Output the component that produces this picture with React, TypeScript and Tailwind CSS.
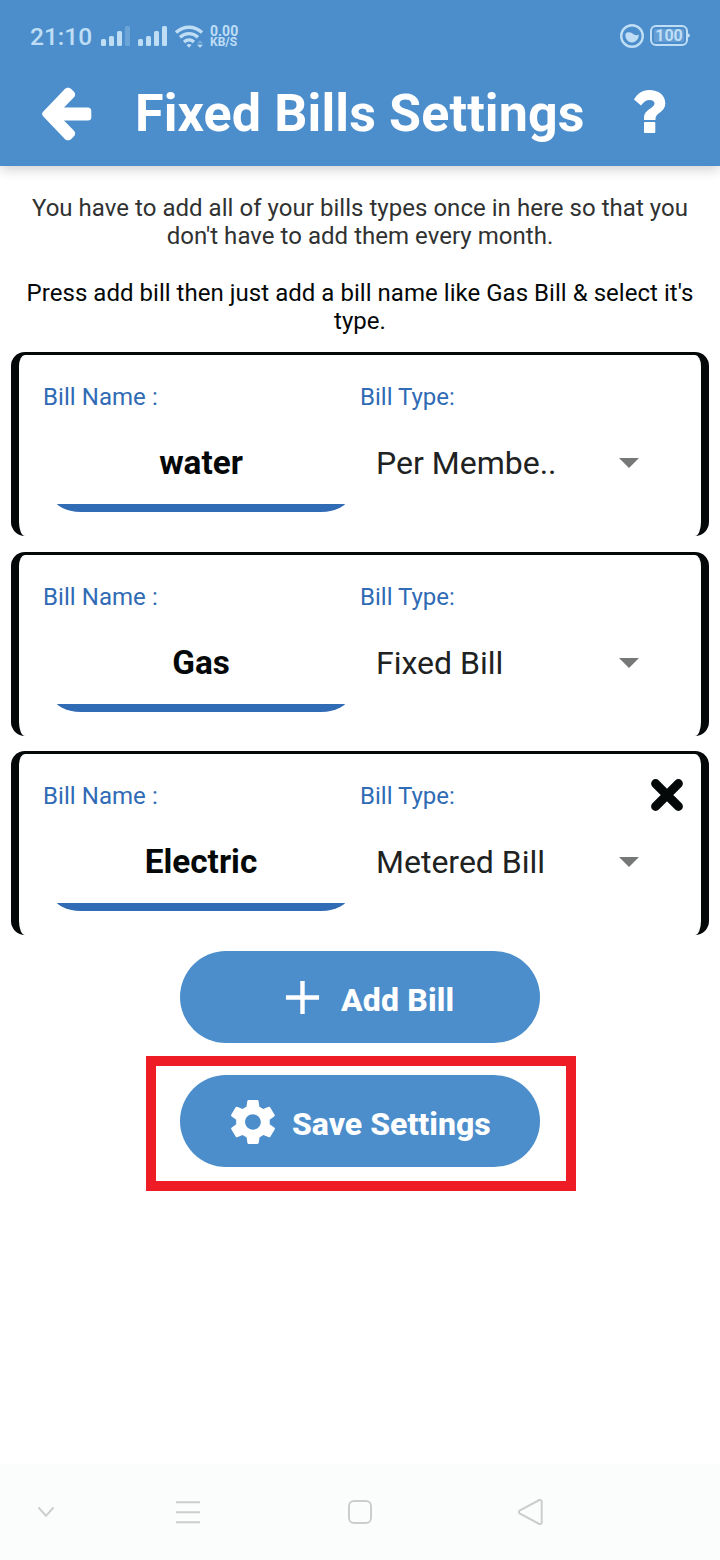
import { IoMdAdd, IoMdSettings } from "react-icons/io";

type Bill = { name: string; type: string; removable?: boolean };

const bills: Bill[] = [
  { name: "water", type: "Per Membe.." },
  { name: "Gas", type: "Fixed Bill" },
  { name: "Electric", type: "Metered Bill", removable: true },
];

function StatusBar() {
  return (
    <div className="flex h-[72px] items-center justify-between pl-[30px] pr-[30px] text-[#bfdef5]">
      <div className="flex items-center">
        <span className="w-[71px] whitespace-nowrap pt-[2px] text-[24.500px] font-medium leading-[28px]">21:10</span>
        <svg className="h-5 w-[66px]" viewBox="0 0 66 20" fill="currentColor">
          <rect x="0" y="13" width="5" height="7" rx="1.5" />
          <rect x="8" y="10" width="5" height="10" rx="1.5" />
          <rect x="16" y="5" width="5" height="15" rx="1.5" />
          <rect x="24" y="0" width="5" height="20" rx="1.5" opacity="0.28" />
          <rect x="37" y="13" width="5" height="7" rx="1.5" />
          <rect x="45" y="10" width="5" height="10" rx="1.5" />
          <rect x="53" y="5" width="5" height="15" rx="1.5" />
          <rect x="61" y="0" width="5" height="20" rx="1.5" />
        </svg>
        <svg className="ml-2 h-[23px] w-[28px]" viewBox="0 0 28 23" fill="none" stroke="currentColor" strokeWidth="3.300">
          <path d="M1 7.500C8.500 0.500 19.500 0.500 27 7.500" />
          <path d="M5 12.300C10.500 7.300 17.500 7.300 23 12.300" />
          <path d="M9 17C12 14.300 16 14.300 19 17" />
          <path d="M11.500 20C13 18.600 15 18.600 16.500 20L14 22.700Z" fill="currentColor" stroke="none" />
          <path d="M22 18.500L25 15L28 18.500Z" fill="currentColor" stroke="none" opacity="0.35" />
          <path d="M22 19.700H28L25 22.700Z" fill="currentColor" stroke="none" />
        </svg>
        <div className="ml-[7px] flex flex-col whitespace-nowrap font-bold">
          <span className="text-[14px] leading-[12px]">0.00</span>
          <span className="text-[12px] leading-[11px]">KB/S</span>
        </div>
      </div>
      <svg className="h-6 w-[70px]" viewBox="0 0 70 24" fill="none">
        <circle cx="12" cy="12" r="10.800" stroke="currentColor" strokeWidth="2.400" />
        <path d="M5.500 9.800C8 7 11.500 8.500 13.500 10.200C15.500 11.800 17.500 11.500 18.800 10.600C18.900 15 16 18.500 12 18.500C7.800 18.500 4.700 14.500 5.500 9.800Z" fill="currentColor" />
        <rect x="31" y="2" width="36" height="19" rx="5" stroke="currentColor" strokeWidth="2" />
        <rect x="34" y="5" width="30" height="13" rx="2" fill="currentColor" opacity="0.22" />
        <path d="M68 9.500C70.500 10 70.500 13 68 13.500Z" fill="currentColor" />
        <text x="49" y="17.200" textAnchor="middle" fill="currentColor" fontSize="16" fontWeight="700" fontFamily="Roboto, sans-serif">100</text>
      </svg>
    </div>
  );
}

function Header() {
  return (
    <header className="h-[166px] shrink-0 bg-[#4c8ecc] text-white shadow-[0_3px_12px_rgba(0,0,0,0.200)]">
      <StatusBar />
      <div className="flex h-[82px] items-center pl-[42px]">
        <svg className="mt-px h-[54px] w-[50px]" viewBox="0 0 50 54" fill="currentColor">
          <path d="M1.100 24.800L22.600 2.300C24.500 .3 27.500 .3 29.500 2.300L32 4.800C33.500 6.300 33.500 8.500 32 10.200L22 20.500H46C48 20.500 49.300 22 49.300 24V30.500C49.300 32.500 48 33.500 46 33.500H22L32 43.800C33.500 45.500 33.500 47.700 32 49.200L29.500 51.700C27.500 53.700 24.500 53.700 22.600 51.700L1.100 29.200C-.2 27.800-.2 26.200 1.100 24.800Z" />
        </svg>
        <h1 className="ml-[43px] mt-[2px] w-[499px] whitespace-nowrap text-[52px] font-bold leading-[60px] tracking-[0.120px]">Fixed Bills Settings</h1>
        <svg className="-mt-[3px] h-[43px] w-[32px]" viewBox="0 0 32 43" fill="currentColor">
          <path d="M0 9.500C3.500 3.500 8.500 0 15 0C24.500 0 31.300 5 31.300 13.500C31.300 22 21.500 23 21.500 28.500V30H10V27.500C10 19 20.500 18.500 20.500 13.500C20.500 11.300 18.500 10 15.500 10C12 10 9.500 12 7 15.500Z" />
          <rect x="10" y="32" width="11.300" height="11" rx="1" />
        </svg>
      </div>
    </header>
  );
}

function BillCard({ name, type, removable }: Bill) {
  return (
    <section className="flex h-[184px] rounded-[14px] border-x-[8px] border-t-[3px] border-[#040808]">
      <div className="w-[341px] pl-[24px] pt-[27px] text-[#306bb5]">
        <div className="text-[24px] leading-[30px] tracking-[0.060px]">Bill Name :</div>
        <div className="ml-[10px] mt-[16px] flex h-[84px] w-[296px] flex-col justify-between">
          <div className="pt-[15px] text-center text-[33.300px] font-bold leading-[40px] text-[#040808]">{name}</div>
          <div className="flex h-[8px] items-end overflow-hidden">
            <div className="h-[40px] w-full shrink-0 rounded-[28px/16px] bg-[#306bb5]" />
          </div>
        </div>
      </div>
      <div className="flex grow flex-col pt-[27px]">
        <div className="flex h-[30px] items-center justify-between pr-[17px] text-[24px] leading-[30px] text-[#306bb5]">
          <span>Bill Type:</span>
          {removable && (
            <svg className="-mt-[2px] h-[34px] w-[34px] text-[#040808]" viewBox="0 0 34 34" stroke="currentColor" strokeWidth="9" strokeLinecap="round">
              <path d="M5.600 5.600L28.400 28.400M28.400 5.600L5.600 28.400" />
            </svg>
          )}
        </div>
        <div className="mt-[31px] flex h-[40px] items-center justify-between pl-[16px] pr-[62px] text-[32px] leading-[40px] text-[#202222]">
          <span>{type}</span>
          <svg className="h-[10px] w-[20px] text-[#757877]" viewBox="0 0 20 10" fill="currentColor">
            <path d="M0 0H20L10 10Z" />
          </svg>
        </div>
      </div>
    </section>
  );
}

function NavBar() {
  return (
    <nav className="flex h-24 shrink-0 items-center bg-[#fbfdfc] pl-[36px] text-[#cbcecd]">
      <svg className="h-6 w-5" viewBox="0 0 20 24" fill="none" stroke="currentColor" strokeWidth="2">
        <path d="M2.500 7.500L10 15.800L17.500 7.500" />
      </svg>
      <svg className="ml-[118px] h-7 w-[28px]" viewBox="0 0 28 28" stroke="currentColor" strokeWidth="2">
        <path d="M2 4.300H26M2 14.300H26M2 24.300H26" />
      </svg>
      <svg className="ml-[144px] h-7 w-[28px]" viewBox="0 0 28 28" fill="none" stroke="currentColor" strokeWidth="2">
        <rect x="3" y="3" width="22" height="22" rx="5" />
      </svg>
      <svg className="ml-[142px] h-7 w-[30px]" viewBox="0 0 30 28" fill="none" stroke="currentColor" strokeWidth="2" strokeLinejoin="round">
        <path d="M23.300 2L4 12.300Q1.700 14 4 15.700L23.300 26Q25.700 26.500 25.700 24V4Q25.700 1.500 23.300 2Z" />
      </svg>
    </nav>
  );
}

export default function App() {
  return (
    <div className="flex h-[1560px] w-[720px] flex-col bg-white font-[Roboto,sans-serif]">
      <Header />
      <main className="flex grow flex-col">
        <div className="flex h-[186px] flex-col pt-[28px] text-center text-[24px] leading-[28px] tracking-[0.035px]">
          <p className="whitespace-nowrap text-[#303232]">
            You have to add all of your bills types once in here so that you
            <br />
            don't have to add them every month.
          </p>
          <p className="mt-[29px] whitespace-nowrap text-[#040808]">
            Press add bill then just add a bill name like Gas Bill &amp; select it's
            <br />
            type.
          </p>
        </div>
        <div className="flex flex-col gap-[15.500px] px-[11px]">
          {bills.map((bill) => (
            <BillCard key={bill.name} {...bill} />
          ))}
        </div>
        <div className="mt-[16px] flex flex-col items-center">
          <button className="flex h-[92px] w-[360px] items-center rounded-[46px] bg-[#4c8ecc] pl-[96px] text-[32px] font-extrabold text-white">
            <IoMdAdd className="h-[53px] w-[53px]" />
            <span className="ml-[12px] mt-[6px] whitespace-nowrap tracking-[0.150px]">Add Bill</span>
          </button>
          <div className="ml-[2px] mt-[13px] flex h-[135px] w-[430px] items-start border-[10px] border-[#ee1c25] pl-[24px] pt-[9px]">
            <button className="flex h-[92px] w-[360px] shrink-0 items-center rounded-[46px] bg-[#4c8ecc] pl-[46px] text-[32px] font-extrabold text-white">
              <IoMdSettings className="mt-px h-[54px] w-[54px]" />
              <span className="ml-[12px] mt-[6px] whitespace-nowrap">Save Settings</span>
            </button>
          </div>
        </div>
      </main>
      <NavBar />
    </div>
  );
}
